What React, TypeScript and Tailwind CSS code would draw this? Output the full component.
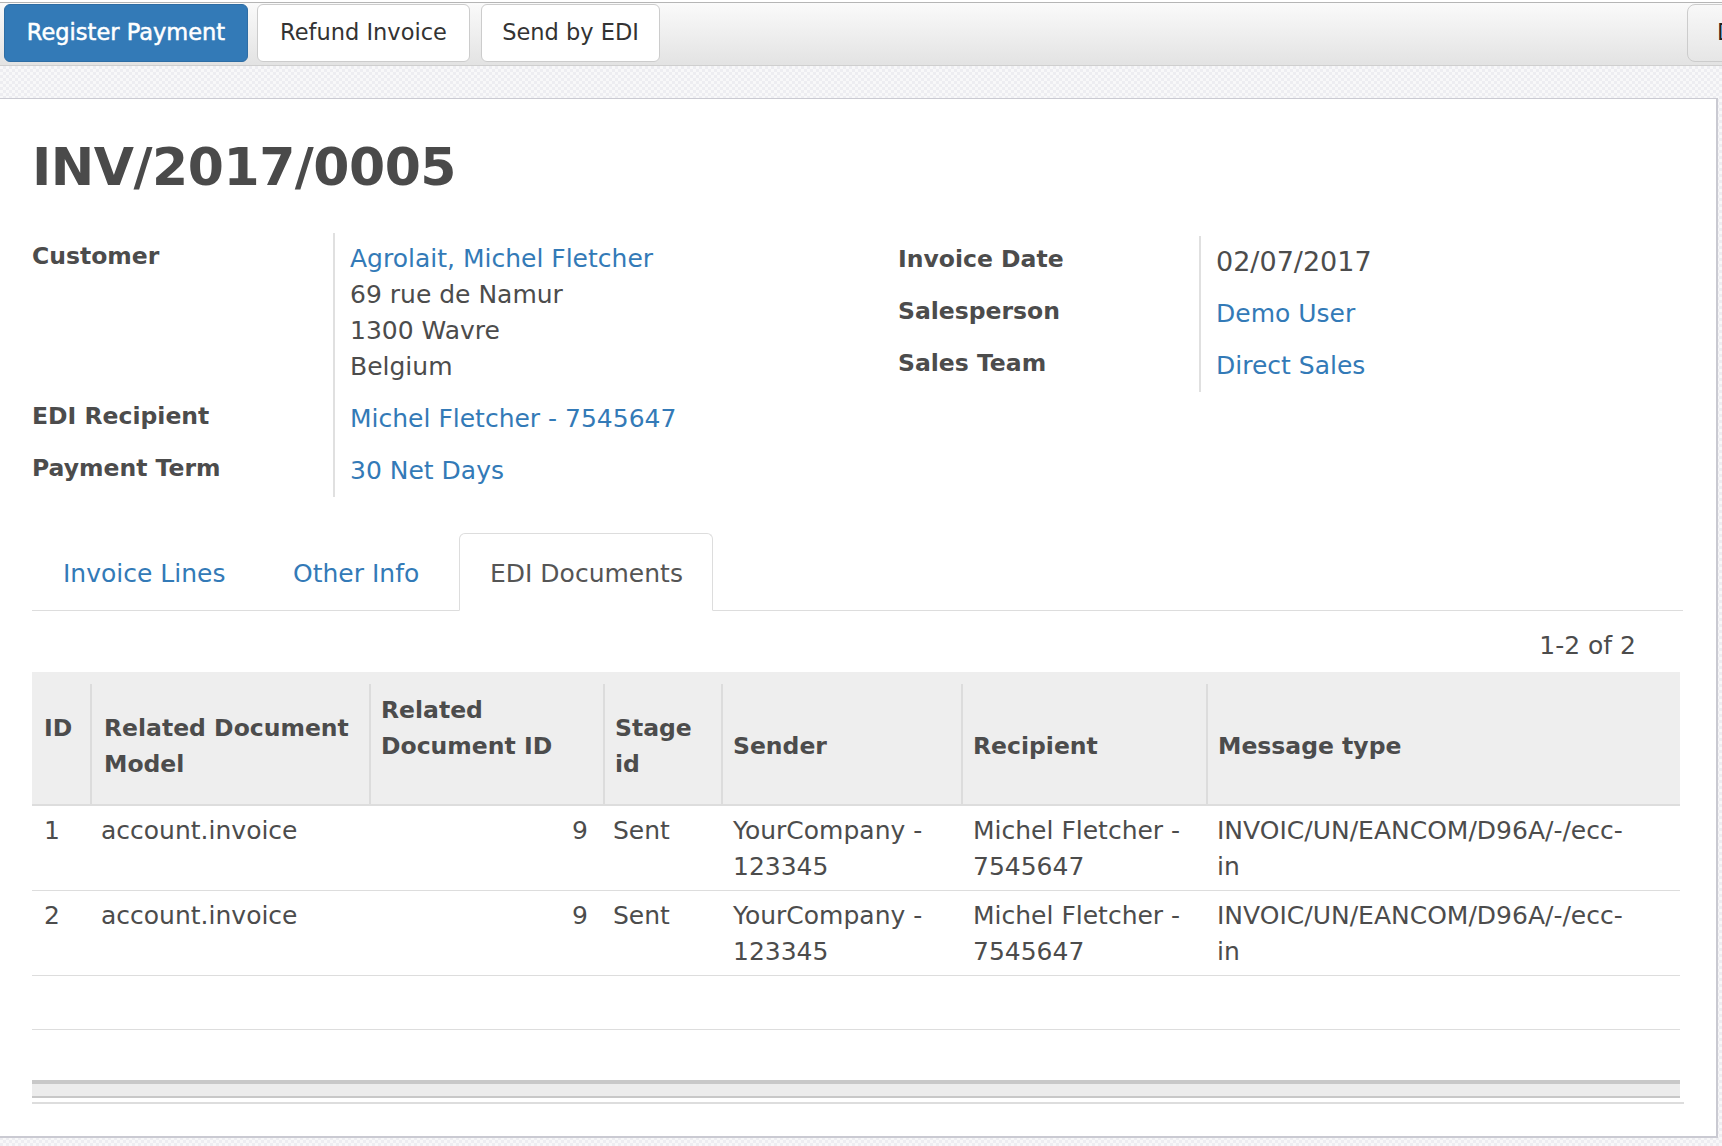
import React from 'react';

const link = 'text-[#337ab7]';

type HeadCol = { width: string; pad: string; lines: string[]; first?: boolean };

const headCols: HeadCol[] = [
  { width: 'w-[58px]', pad: 'pt-[26px] pl-[12px]', lines: ['ID'], first: true },
  { width: 'w-[279px]', pad: 'pt-[26px] pl-[12px]', lines: ['Related Document', 'Model'] },
  { width: 'w-[234px]', pad: 'pt-[8px] pl-[10px]', lines: ['Related', 'Document ID'] },
  { width: 'w-[118px]', pad: 'pt-[26px] pl-[10px]', lines: ['Stage', 'id'] },
  { width: 'w-[240px]', pad: 'pt-[44px] pl-[10px]', lines: ['Sender'] },
  { width: 'w-[245px]', pad: 'pt-[44px] pl-[10px]', lines: ['Recipient'] },
  { width: 'w-[474px]', pad: 'pt-[44px] pl-[10px]', lines: ['Message type'] },
];

const docs = [
  { id: '1', model: 'account.invoice', res: '9', stage: 'Sent' },
  { id: '2', model: 'account.invoice', res: '9', stage: 'Sent' },
];

function Field({ label, children, labelPad = 'pt-[5px]' }: { label: string; children: React.ReactNode; labelPad?: string }) {
  return (
    <div className="flex">
      <div className={`w-[301px] shrink-0 pb-[8px] ${labelPad} text-[23.5px] font-bold leading-[36px]`}>{label}</div>
      <div className="flex-1 border-l-2 border-[#e0e0e0] pl-[15px] py-[8px] text-[25px] leading-[36px]">{children}</div>
    </div>
  );
}

export default function App() {
  return (
    <div className="w-[1722px] h-[1146px] overflow-hidden bg-[#f4f4f6] bg-[image:repeating-conic-gradient(#ededf1_0%_25%,#f8f8f9_0%_50%)] bg-[length:6px_6px] font-['DejaVu_Sans',sans-serif] text-[#4c4c4c]">
      {/* control panel buttons */}
      <div className="h-[2px] bg-white" />
      <div className="flex h-[64px] items-start gap-[9px] overflow-hidden border-y border-t-[#b5b5b5] border-b-[#cfcfcf] bg-gradient-to-b from-[#fafafa] to-[#e3e3e3] pl-[4px] pt-[1px]">
        <button className="flex h-[58px] w-[244px] items-center justify-center rounded-[6px] border border-[#2e6da4] bg-[#337ab7] text-[22.5px] text-white [-webkit-text-stroke:0.5px_#ffffff]">
          Register Payment
        </button>
        <button className="flex h-[58px] w-[213px] items-center justify-center rounded-[6px] border border-[#cccccc] bg-white text-[22.5px] text-[#333333]">
          Refund Invoice
        </button>
        <button className="ml-[2px] flex h-[58px] w-[179px] items-center justify-center rounded-[6px] border border-[#cccccc] bg-white text-[22.5px] text-[#333333]">
          Send by EDI
        </button>
        <button className="ml-auto flex h-[58px] w-[160px] shrink-0 translate-x-[125px] items-center rounded-l-[8px] border border-[#cccccc] bg-gradient-to-b from-[#f8f8f8] to-[#e6e6e6] pl-[29px] text-[22.5px] text-[#222222]">
          Discard
        </button>
      </div>

      {/* sheet */}
      <div className="mt-[32px] h-[1040px] w-[1718px] overflow-hidden border-t border-r-2 border-b-2 border-[#cacad2] bg-white pl-[32px]">
        <h1 className="pt-[42px] text-[52px] font-bold leading-[52px] tracking-[-0.5px] text-[#4a4a4a]">INV/2017/0005</h1>

        <div className="mt-[40px] flex w-[1648px] items-start">
          <div className="w-[866px] shrink-0">
            <Field label="Customer">
              <div className={link}>Agrolait, Michel Fletcher</div>
              <div>69 rue de Namur</div>
              <div>1300 Wavre</div>
              <div>Belgium</div>
            </Field>
            <Field label="EDI Recipient">
              <div className={link}>Michel Fletcher - 7545647</div>
            </Field>
            <Field label="Payment Term">
              <div className={link}>30 Net Days</div>
            </Field>
          </div>
          <div className="mt-[3px] flex-1">
            <Field label="Invoice Date">
              <div className="text-[27px]">02/07/2017</div>
            </Field>
            <Field label="Salesperson">
              <div className={link}>Demo User</div>
            </Field>
            <Field label="Sales Team">
              <div className={link}>Direct Sales</div>
            </Field>
          </div>
        </div>

        {/* notebook tabs */}
        <div className="mt-[36px] flex w-[1651px] gap-[4px] border-b border-[#dddddd]">
          <div className={`-mb-px h-[78px] w-[226px] border border-transparent pl-[30px] pt-[21px] text-[25px] leading-[37px] ${link}`}>
            Invoice Lines
          </div>
          <div className={`-mb-px h-[78px] w-[193px] border border-transparent pl-[30px] pt-[21px] text-[25px] leading-[37px] ${link}`}>
            Other Info
          </div>
          <div className="-mb-px h-[78px] w-[254px] rounded-t-[6px] border border-[#dddddd] border-b-white bg-white pl-[30px] pt-[21px] text-[25px] leading-[37px] text-[#555555]">
            EDI Documents
          </div>
        </div>

        {/* pager */}
        <div className="flex h-[61px] w-[1648px] justify-end pr-[44px] pt-[17px] text-[25px] leading-[36px]">1-2 of 2</div>

        {/* EDI documents list */}
        <table className="w-[1648px] table-fixed border-separate border-spacing-0">
          <thead>
            <tr className="bg-[#eeeeee]">
              {headCols.map((c) => (
                <th key={c.lines.join(' ')} className={`${c.width} border-b-2 border-[#dddddd] p-0 text-left align-top text-[23.5px] font-bold leading-[36px]`}>
                  <div className={`mt-[12px] h-[120px] ${c.pad} ${c.first ? '' : 'border-l-2 border-[#dcdcdc]'}`}>
                    {c.lines.map((l) => (
                      <div key={l}>{l}</div>
                    ))}
                  </div>
                </th>
              ))}
            </tr>
          </thead>
          <tbody className="text-[25px] leading-[36px]">
            {docs.map((d) => (
              <tr key={d.id}>
                <td className="border-b border-[#dddddd] pb-[5px] pl-[12px] pt-[7px] align-top">{d.id}</td>
                <td className="border-b border-[#dddddd] pb-[5px] pl-[11px] pt-[7px] align-top">{d.model}</td>
                <td className="border-b border-[#dddddd] pb-[5px] pr-[15px] pt-[7px] text-right align-top">{d.res}</td>
                <td className="border-b border-[#dddddd] pb-[5px] pl-[10px] pt-[7px] align-top">{d.stage}</td>
                <td className="border-b border-[#dddddd] pb-[5px] pl-[12px] pt-[7px] align-top">
                  <div>YourCompany -</div>
                  <div>123345</div>
                </td>
                <td className="border-b border-[#dddddd] pb-[5px] pl-[12px] pt-[7px] align-top">
                  <div>Michel Fletcher -</div>
                  <div>7545647</div>
                </td>
                <td className="border-b border-[#dddddd] pb-[5px] pl-[11px] pt-[7px] align-top">
                  <div>INVOIC/UN/EANCOM/D96A/-/ecc-</div>
                  <div>in</div>
                </td>
              </tr>
            ))}
            <tr>
              <td colSpan={7} className="h-[54px] border-b border-[#dddddd] p-0" />
            </tr>
            <tr>
              <td colSpan={7} className="h-[50px] p-0" />
            </tr>
          </tbody>
          <tfoot>
            <tr>
              <td colSpan={7} className="h-[18px] border-t-4 border-b-2 border-[#c8c8c8] bg-[#ececec] p-0" />
            </tr>
          </tfoot>
        </table>
        <div className="mt-[4px] h-[2px] w-[1652px] bg-[#dddddd]" />
      </div>
    </div>
  );
}
